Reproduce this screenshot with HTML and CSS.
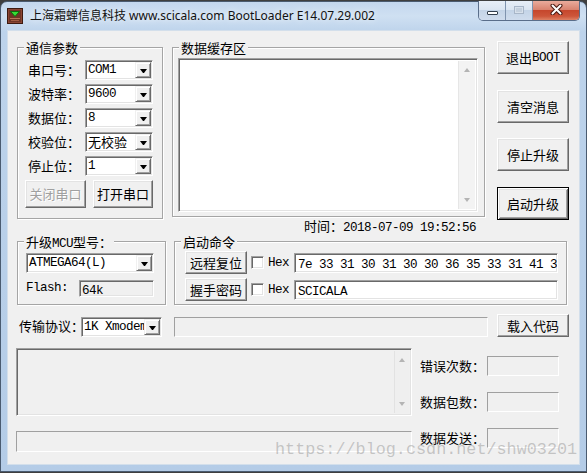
FILE: index.html
```html
<!DOCTYPE html>
<html>
<head>
<meta charset="utf-8">
<link rel="stylesheet" href="styles.css">
</head>
<body>
<div class="win">
  <div class="titlebar">
    <svg class="appicon" width="16" height="16" viewBox="0 0 16 16">
      <rect x="0.5" y="0.5" width="15" height="15" fill="#6e3526" stroke="#3d1a10"/>
      <rect x="1.5" y="1.5" width="13" height="13" fill="none" stroke="#8a4634"/>
      <path d="M3.5 3.5 H12.5 L8 8.5 Z" fill="#35dc35" stroke="#0d6a0d"/>
      <rect x="3" y="10" width="10" height="1" fill="#b8745a"/>
      <rect x="4" y="12" width="8" height="1" fill="#a25c42"/>
    </svg>
    <span class="title">上海霜蝉信息科技 www.scicala.com BootLoader E14.07.29.002</span>
    <div class="caps">
      <div class="cap cmin"><span class="minbar"></span></div>
      <div class="cap cmax"><span class="maxbox"></span></div>
      <div class="cap cclose">
        <svg width="13" height="11" viewBox="0 0 13 11">
          <path d="M2.5 1.5 L10.5 9.5 M10.5 1.5 L2.5 9.5" stroke="#4a1a12" stroke-width="4" stroke-linecap="round"/>
          <path d="M2.5 1.5 L10.5 9.5 M10.5 1.5 L2.5 9.5" stroke="#ffffff" stroke-width="2" stroke-linecap="round"/>
        </svg>
      </div>
    </div>
  </div>

  <div class="client">
    <div class="row1">
      <div class="grp g-comm">
        <span class="gt">通信参数</span>
        <div class="frow"><span class="lab">串口号：</span><div class="combo sunk w68"><span class="cv m">COM1</span><span class="dd"></span></div></div>
        <div class="frow"><span class="lab">波特率：</span><div class="combo sunk w68"><span class="cv m">9600</span><span class="dd"></span></div></div>
        <div class="frow"><span class="lab">数据位：</span><div class="combo sunk w68"><span class="cv m">8</span><span class="dd"></span></div></div>
        <div class="frow"><span class="lab">校验位：</span><div class="combo sunk w68"><span class="cv">无校验</span><span class="dd"></span></div></div>
        <div class="frow"><span class="lab">停止位：</span><div class="combo sunk w68"><span class="cv m">1</span><span class="dd"></span></div></div>
        <div class="brow">
          <div class="btn dis b-close">关闭串口</div>
          <div class="btn b-open">打开串口</div>
        </div>
      </div>

      <div class="col-data">
        <div class="grp g-data">
          <span class="gt">数据缓存区</span>
          <div class="memo sunk">
            <div class="vsb"><span class="arr up"></span><span class="arr dn"></span></div>
          </div>
        </div>
        <div class="time">时间：<span class="m">2018-07-09 19:52:56</span></div>
      </div>

      <div class="btncol">
        <div class="btn big">退出<span class="m">BOOT</span></div>
        <div class="btn big b2">清空消息</div>
        <div class="btn big b3">停止升级</div>
        <div class="btn big b4 def">启动升级</div>
      </div>
    </div>

    <div class="row2">
      <div class="grp g-mcu">
        <span class="gt">升级<span class="m">MCU</span>型号：</span>
        <div class="combo sunk w128"><span class="cv m">ATMEGA64(L)</span><span class="dd"></span></div>
        <div class="flrow"><span class="fl m">Flash:</span><div class="ro sunk"><span class="m">64k</span></div></div>
      </div>
      <div class="grp g-cmd">
        <span class="gt">启动命令</span>
        <div class="crow">
          <div class="btn cbtn">远程复位</div>
          <span class="chk sunk"></span><span class="hex m">Hex</span>
          <div class="edit sunk"><span class="m">7e 33 31 30 31 30 30 36 35 33 31 41 30 30 30</span></div>
        </div>
        <div class="crow r2">
          <div class="btn cbtn">握手密码</div>
          <span class="chk sunk"></span><span class="hex m">Hex</span>
          <div class="edit sunk"><span class="m">SCICALA</span></div>
        </div>
      </div>
    </div>

    <div class="row3">
      <span class="lab3">传输协议：</span>
      <div class="combo sunk w81"><span class="cv m">1K Xmodem</span><span class="dd"></span></div>
      <div class="prog thin"></div>
      <div class="btn load">载入代码</div>
    </div>

    <div class="row4">
      <div class="left4">
        <div class="list sunk">
          <div class="vsb lvsb"><span class="arr up"></span><span class="arr dn"></span></div>
        </div>
        <div class="stat thin"></div>
      </div>
      <div class="right4">
        <div class="srow"><span class="slab">错误次数：</span><div class="sbox thin"></div></div>
        <div class="srow"><span class="slab">数据包数：</span><div class="sbox thin"></div></div>
        <div class="srow"><span class="slab">数据发送：</span><div class="sbox thin"></div></div>
      </div>
    </div>
  </div>

  <div class="wm">https://blog.csdn.net/shw03201</div>
</div>
</body>
</html>
```

FILE: styles.css
```css
* { box-sizing: border-box; }
html, body { margin: 0; padding: 0; }
body {
  width: 587px;
  height: 473px;
  overflow: hidden;
  background: #3f3f3f;
  font-family: "Noto Sans CJK SC", sans-serif;
  font-size: 13px;
  color: #000;
}
.m {
  font-family: "Liberation Mono", "Noto Sans CJK SC", monospace;
  font-size: 12.6px;
  letter-spacing: -0.56px;
}

/* window frame */
.win {
  position: relative;
  margin-top: 1px;
  width: 587px;
  height: 471px;
  border: 1px solid #4a5b70;
  border-radius: 7px 7px 0 0;
  background: linear-gradient(to bottom, #c3d7ee 0, #cfe0f2 14px, #bdd3eb 30px, #b4cce7 100%);
  padding: 0 6px 6px 6px;
  display: flex;
  flex-direction: column;
}
.titlebar {
  height: 28px;
  display: flex;
  align-items: center;
}
.appicon { display: block; flex: none; }
.title {
  margin-left: 7px;
  font-family: "Noto Sans", "Noto Sans CJK SC", sans-serif;
  font-size: 12px;
  line-height: 16px;
  color: #111;
  text-shadow: 0 0 6px rgba(255,255,255,0.9);
  white-space: nowrap;
}
.caps {
  margin-left: auto;
  align-self: flex-start;
  margin-top: -1px;
  height: 20px;
  display: flex;
  border: 1px solid #5a6e8a;
  border-top: none;
  border-radius: 0 0 5px 5px;
  overflow: hidden;
}
.cap {
  height: 19px;
  display: flex;
  align-items: center;
  justify-content: center;
}
.cmin, .cmax {
  width: 27px;
  border-right: 1px solid #7f93ae;
  background: linear-gradient(to bottom, #e7eef7 0, #dbe5f1 45%, #c4d4e7 50%, #cfdced 100%);
}
.cclose {
  width: 46px;
  background: linear-gradient(to bottom, #e9ab9c 0, #d98470 45%, #c6472d 50%, #cd563a 80%, #dd8164 100%);
}
.minbar {
  display: block;
  width: 11px;
  height: 4px;
  margin-top: 5px;
  background: #fff;
  border: 1px solid #34404f;
  border-radius: 1px;
}
.maxbox {
  display: block;
  width: 10px;
  height: 8px;
  margin-top: -2px;
  border: 1px solid #a8b6c8;
  box-shadow: inset 0 0 0 1px #d8e1ec;
  background: #c4d0de;
}
.cclose svg { display: block; margin-top: -2px; }

/* client */
.client {
  flex: 1;
  background: #f0f0f0;
  border: 1px solid #d3dfeb;
  padding-top: 10px;
  display: flex;
  flex-direction: column;
}

/* 3D borders */
.sunk {
  border: 1px solid;
  border-color: #a0a0a0 #ffffff #ffffff #a0a0a0;
  box-shadow: inset 1px 1px 0 #696969, inset -1px -1px 0 #e3e3e3;
}
.thin {
  border: 1px solid;
  border-color: #a0a0a0 #ffffff #ffffff #a0a0a0;
}
.btn {
  display: flex;
  align-items: center;
  justify-content: center;
  background: #f0f0f0;
  border: 1px solid;
  border-color: #ffffff #696969 #696969 #ffffff;
  box-shadow: inset -1px -1px 0 #a0a0a0, inset 1px 1px 0 #e3e3e3;
  line-height: 16px;
  white-space: nowrap;
}
.btn.def {
  border-color: #000;
  box-shadow: inset 1px 1px 0 #fff, inset -1px -1px 0 #696969, inset 2px 2px 0 #e3e3e3, inset -2px -2px 0 #a0a0a0;
}
.btn.dis {
  color: #a0a0a0;
  text-shadow: 1px 1px 0 #fff;
}

/* group boxes */
.grp {
  position: relative;
  border: 1px solid #a5a5a5;
  box-shadow: inset 1px 1px 0 #fff, 1px 1px 0 #fff;
}
.gt {
  position: absolute;
  top: -8px;
  left: 6px;
  padding: 0 2px;
  background: #f0f0f0;
  line-height: 15px;
  white-space: nowrap;
}

/* combo */
.combo {
  display: flex;
  height: 20px;
  padding: 1px;
  background: #fff;
}
.w68 { width: 68px; }
.w128 { width: 128px; }
.w81 { width: 81px; }
.cv {
  flex: 1;
  min-width: 0;
  overflow: hidden;
  white-space: nowrap;
  padding-left: 1px;
  line-height: 16px;
}
.dd {
  flex: none;
  width: 16px;
  height: 16px;
  display: flex;
  align-items: center;
  justify-content: center;
  background: #f0f0f0;
  border: 1px solid;
  border-color: #f0f0f0 #696969 #696969 #f0f0f0;
  box-shadow: inset 1px 1px 0 #fff, inset -1px -1px 0 #a0a0a0;
}
.dd::after {
  content: "";
  display: block;
  width: 1px;
  height: 0;
  border-top: 4px solid #000;
  border-left: 3px solid transparent;
  border-right: 3px solid transparent;
  margin-top: 1px;
}

/* row 1 */
.row1 {
  display: flex;
  align-items: flex-start;
  margin-left: 9px;
}
.g-comm {
  margin-top: 6px;
  width: 146px;
  height: 172px;
  padding: 12px 0 0 7px;
}
.frow {
  display: flex;
  align-items: center;
  height: 20px;
  margin-bottom: 4px;
}
.lab {
  width: 60px;
  padding-left: 3px;
  line-height: 20px;
  white-space: nowrap;
}
.brow {
  display: flex;
  margin-top: 1px;
}
.b-close { width: 61px; height: 28px; }
.b-open { width: 60px; height: 28px; margin-left: 7px; }

.col-data { margin-left: 9px; }
.g-data {
  margin-top: 6px;
  width: 313px;
  height: 170px;
  padding: 10px 0 0 5px;
}
.memo {
  width: 300px;
  height: 154px;
  background: #fff;
  padding: 2px;
  display: flex;
  justify-content: flex-end;
}
.vsb {
  width: 17px;
  height: 100%;
  background: #f3f3f3;
  border-left: 1px solid #e6e6e6;
  display: flex;
  flex-direction: column;
  justify-content: space-between;
  align-items: center;
  padding: 7px 0;
}
.arr {
  display: block;
  width: 1px;
  height: 0;
  border-left: 3px solid transparent;
  border-right: 3px solid transparent;
}
.arr.up { border-bottom: 4px solid #b4b4b4; }
.arr.dn { border-top: 4px solid #b4b4b4; }
.time {
  margin-top: 2px;
  height: 14px;
  line-height: 14px;
  text-align: right;
  padding-right: 9px;
  white-space: nowrap;
}

.btncol {
  margin-left: 12px;
  width: 72px;
  display: flex;
  flex-direction: column;
}
.big { height: 33px; }
.b2 { margin-top: 16px; }
.b3 { margin-top: 15px; }
.b4 { margin-top: 16px; }

/* row 2 */
.row2 {
  display: flex;
  margin-left: 9px;
  margin-top: 8px;
}
.g-mcu {
  width: 149px;
  height: 64px;
  padding: 11px 0 0 8px;
}
.flrow {
  display: flex;
  align-items: center;
  margin-top: 7px;
  height: 17px;
}
.fl { width: 53px; line-height: 17px; }
.ro {
  width: 75px;
  height: 17px;
  background: #f0f0f0;
  padding: 0 2px;
  line-height: 15px;
}
.g-cmd {
  margin-left: 8px;
  width: 393px;
  height: 64px;
  padding: 9px 8px 0 10px;
}
.crow {
  display: flex;
  align-items: center;
  height: 23px;
}
.crow.r2 { margin-top: 4px; }
.cbtn { width: 62px; height: 23px; }
.chk {
  width: 13px;
  height: 13px;
  background: #fff;
  margin-left: 4px;
}
.hex { margin-left: 4px; line-height: 14px; }
.edit {
  margin-left: auto;
  width: 264px;
  height: 20px;
  background: #fff;
  padding: 0 2px 0 3px;
  line-height: 18px;
  overflow: hidden;
  white-space: nowrap;
}

/* row 3 */
.row3 {
  display: flex;
  align-items: flex-end;
  height: 23px;
  margin-top: 9px;
  margin-left: 11px;
}
.lab3 {
  width: 62px;
  line-height: 23px;
  white-space: nowrap;
  align-self: center;
}
.prog {
  margin-left: 12px;
  width: 314px;
  height: 20px;
  background: #f0f0f0;
}
.load {
  margin-left: 9px;
  width: 72px;
  height: 23px;
}

/* row 4 */
.row4 {
  display: flex;
  margin-top: 11px;
  margin-left: 8px;
}
.left4 { width: 396px; }
.list {
  height: 68px;
  background: #f0f0f0;
  padding: 2px;
  display: flex;
  justify-content: flex-end;
}
.lvsb {
  width: 15px;
  background: #efefef;
  border-left: 1px solid #e2e2e2;
}
.stat {
  margin-top: 15px;
  height: 21px;
  background: #f0f0f0;
}
.right4 {
  margin-left: 8px;
  padding-top: 8px;
  display: flex;
  flex-direction: column;
}
.srow {
  display: flex;
  align-items: center;
  height: 20px;
  margin-bottom: 16px;
}
.slab {
  width: 67px;
  line-height: 20px;
  white-space: nowrap;
}
.sbox {
  width: 72px;
  height: 20px;
  background: #f0f0f0;
}

/* watermark */
.wm {
  position: absolute;
  left: 274px;
  top: 434px;
  font-family: "Liberation Mono", monospace;
  font-size: 16.8px;
  line-height: 28px;
  color: rgba(110,110,110,0.35);
  white-space: nowrap;
}
```
